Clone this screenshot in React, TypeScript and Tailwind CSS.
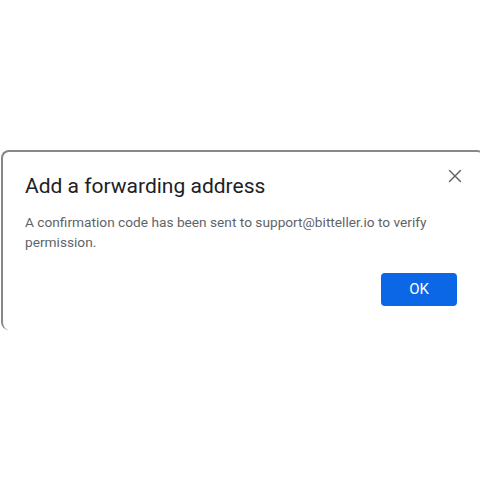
import { X } from "lucide-react"

export default function App() {
  return (
    <div className="h-[480px] w-[480px] overflow-hidden bg-white pt-[150px] pl-px">
      <div
        className="relative h-[180px] w-[484px] rounded-lg border-t-2 border-l-2 border-[#888888] bg-white pt-[20px] pr-[20px] pl-[22px]"
        style={{ fontFamily: "Roboto, 'Noto Sans', sans-serif" }}
      >
        {/* Close */}
        <button className="absolute top-[12px] right-[18px] flex h-6 w-6 items-center justify-center text-[#5f6368]">
          <X size={22} strokeWidth={1.6} />
        </button>

        <h2 className="text-[21px] leading-7 font-normal text-[#202124]">
          Add a forwarding address
        </h2>
        <p className="mt-3 text-[13.7px] leading-5 text-[#5f6368]">
          A confirmation code has been sent to support@bitteller.io to verify
          permission.
        </p>

        <div className="mt-[21px] flex justify-end">
          <button className="mr-[8px] flex h-[33px] w-[76px] items-center justify-center rounded-[4px] bg-[#0b67e6] text-[15px] font-normal text-white">
            OK
          </button>
        </div>
      </div>
    </div>
  )
}
